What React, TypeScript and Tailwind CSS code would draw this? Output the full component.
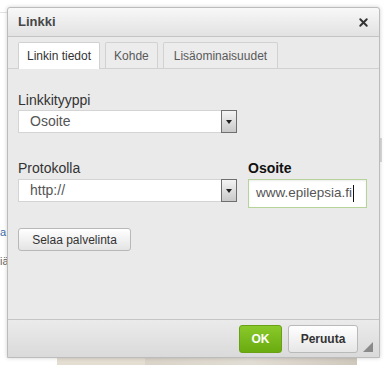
import { X } from "lucide-react";

const font = { fontFamily: '"Liberation Sans", Arial, sans-serif' };

function SelectBox({ value }: { value: string }) {
  return (
    <div className="flex h-[23px] w-[219px] items-center border border-[#d4d4d4] border-r-0 bg-white pl-[11px]">
      <span className="flex-1 text-[14px] text-[#555]">{value}</span>
      <div className="flex h-[23px] w-[16px] items-center justify-center border border-[#6f6f6f] bg-gradient-to-b from-[#f4f4f4] to-[#c9c9c9]">
        <span className="block h-0 w-0 border-x-[3.5px] border-t-[4px] border-x-transparent border-t-[#222]" />
      </div>
    </div>
  );
}

function Tab({ label, active, wide }: { label: string; active?: boolean; wide?: boolean }) {
  return (
    <div
      className={`flex h-[26px] items-center border border-b-0 border-[#d1d1d1] text-[12px] rounded-t-[2px] ${
        wide ? "px-[10px]" : "px-[8px]"
      } ${active ? "bg-white text-[#333] -mb-px h-[27px]" : "bg-[#ececec] text-[#595959]"}`}
    >
      {label}
    </div>
  );
}

export default function App() {
  return (
    <div className="relative h-[365px] w-[390px] overflow-hidden bg-white" style={font}>
      {/* underlying page */}
      <div className="absolute left-0 top-[12px] h-px w-[8px] bg-[#e2e2e2]" />
      <div className="absolute left-0 top-[225px] text-[11px] leading-[14px] text-[#3d6aa5]">a</div>
      <div className="absolute left-0 top-[254px] text-[11px] leading-[14px] text-[#666]">iä</div>
      <div className="absolute left-[379px] top-[138px] h-[24px] w-[3px] bg-[#dcdcdc]" />
      <div className="absolute left-[57px] top-[356px] flex h-[12px] w-[300px]">
        <div className="w-[88px] bg-[#e3ddd2]" />
        <div className="flex-1 bg-gradient-to-r from-[#d9d3c8] via-[#e2ddd4] to-[#cfc8bd]" />
      </div>

      {/* dialog */}
      <div className="absolute left-[7px] top-[7px] flex h-[351px] w-[373px] flex-col rounded-t-[3px] border border-[#bcbcbc] bg-[#eaeaea] shadow-[0_0_4px_rgba(0,0,0,0.18)]">
        <div className="flex h-[29px] items-center justify-between rounded-t-[3px] border-b border-[#c4c4c4] bg-gradient-to-b from-[#f8f8f8] to-[#e2e2e2] pl-[10px] pr-[9px]">
          <span className="text-[13px] font-bold text-[#474747]">Linkki</span>
          <X size={13} strokeWidth={3.5} className="text-[#333]" />
        </div>

        <div className="flex flex-1 flex-col">
          <div className="flex items-end gap-[5px] border-b border-[#d1d1d1] px-[10px] pt-[5px]">
            <Tab label="Linkin tiedot" active />
            <Tab label="Kohde" />
            <Tab label="Lisäominaisuudet" wide />
          </div>

          <div className="flex flex-col px-[10px] pt-[23px]">
            <label className="text-[14px] leading-[16px] text-[#333]">Linkkityyppi</label>
            <div className="mt-[2px]">
              <SelectBox value="Osoite" />
            </div>

            <div className="mt-[27px] flex gap-[11px]">
              <div className="flex flex-col">
                <label className="text-[14px] leading-[16px] text-[#333]">Protokolla</label>
                <div className="mt-[3px]">
                  <SelectBox value="http://" />
                </div>
              </div>
              <div className="flex flex-col">
                <label className="text-[14px] font-bold leading-[16px] text-[#111]">Osoite</label>
                <div className="mt-[3px] flex h-[29px] w-[119px] items-center border border-[#b6d39a] bg-white pl-[7px] shadow-[inset_0_1px_2px_rgba(0,0,0,0.08)]">
                  <span className="text-[13.5px] text-[#555]">www.epilepsia.fi</span>
                  <span className="ml-px h-[17px] w-px bg-[#111]" />
                </div>
              </div>
            </div>

            <button className="mt-[20px] flex h-[23px] w-[113px] items-center justify-center rounded-[3px] border border-[#b8b8b8] bg-gradient-to-b from-white to-[#e4e4e4] text-[12px] text-[#333]">
              Selaa palvelinta
            </button>
          </div>
        </div>

        <div className="relative flex h-[38px] items-center justify-end gap-[6px] border-t border-[#c5c5c5] bg-gradient-to-b from-[#ebebeb] to-[#dadada] pr-[21px] pt-[1px]">
          <button className="flex h-[28px] w-[43px] items-center justify-center rounded-[3px] border border-[#6aa014] bg-gradient-to-b from-[#89c92a] to-[#6aab0e] text-[12px] font-bold text-white">
            OK
          </button>
          <button className="flex h-[28px] w-[70px] items-center justify-center rounded-[3px] border border-[#b9b9b9] bg-gradient-to-b from-white to-[#e6e6e6] text-[12px] font-bold text-[#333]">
            Peruuta
          </button>
          <span className="absolute bottom-[5px] right-[6px] h-0 w-0 border-b-[10px] border-l-[10px] border-b-[#8a8a8a] border-l-transparent" />
        </div>
      </div>
    </div>
  );
}
